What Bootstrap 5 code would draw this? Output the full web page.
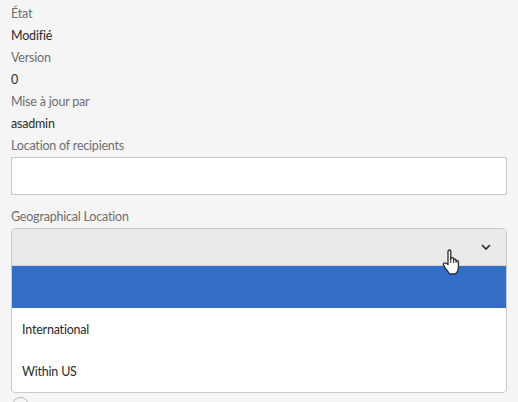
<!DOCTYPE html>
<html lang="fr">
<head>
<meta charset="utf-8">
<title>Propriétés</title>
<link href="https://cdn.jsdelivr.net/npm/bootstrap@5.3.0/dist/css/bootstrap.min.css" rel="stylesheet">
<style>
html,body{height:100%;overflow:hidden}
body{background:#f5f5f5;font-family:"Lato","Noto Sans",sans-serif;font-size:12.5px;letter-spacing:-.2px;color:#2c2c2c}
.sheet{padding:2px 11px 0 11px;position:relative}
.meta-label,.meta-value{height:22px;line-height:24px;margin:0}
.meta-label{color:#6e6e6e}
.meta-value{color:#2c2c2c}
.loc-input{display:block;width:100%;height:38px;margin-top:1px;background:#fff;border:1px solid #cacaca;border-radius:0;padding:0 10px}
.geo-label{margin-top:10px}
.geo-select{margin-top:1px;border:1px solid #cacaca;border-radius:4px;background:#fff;overflow:hidden}
.geo-toggle{height:37px;background:#eaeaea;border-bottom:1px solid #d4d4d4;padding-right:15px}
.geo-opt{height:42px;padding:2px 0 0 10px;color:#2c2c2c}
.geo-opt.is-active{background:#326ec8}
.radio-peek{width:17px;height:17px;border:1px solid #b8b8b8;border-radius:50%;background:#f5f5f5;margin:4px 0 0 1px}
.hand{position:absolute;left:440px;top:248px;width:24px;height:28px}
</style>
</head>
<body>
<div class="sheet">
  <p class="meta-label">État</p>
  <p class="meta-value">Modifié</p>
  <p class="meta-label">Version</p>
  <p class="meta-value">0</p>
  <p class="meta-label">Mise à jour par</p>
  <p class="meta-value">asadmin</p>
  <p class="meta-label">Location of recipients</p>
  <input class="loc-input" type="text" aria-label="Location of recipients">
  <p class="meta-label geo-label">Geographical Location</p>
  <div class="geo-select">
    <div class="geo-toggle d-flex align-items-center justify-content-end">
      <svg width="10" height="6" viewBox="0 0 10 6"><path d="M1 1l4 4 4-4" fill="none" stroke="#2c2c2c" stroke-width="1.7"/></svg>
    </div>
    <div class="geo-opt is-active"></div>
    <div class="geo-opt d-flex align-items-center">International</div>
    <div class="geo-opt d-flex align-items-center">Within US</div>
  </div>
  <div class="radio-peek"></div>
  <svg class="hand" viewBox="0 0 24 28"><path d="M8 3.500c0-2 2.800-2 2.800 0V11l.2-.6c.3-1.200 2.600-1 2.600.4V12c.3-1.200 2.500-1 2.500.4v.8c.3-1 2.300-.8 2.300.5v6c0 3-1.600 4.800-3 6.300H10c-1.500-2-5-5-6.500-9-.7-1.900 1.200-2.800 2.500-1.700L8 16.500z" fill="#fff" stroke="#2a2a2a" stroke-width="1.300" stroke-linejoin="round"/><path d="M10.800 10v5M13.600 11v4M16.100 12v3" stroke="#2a2a2a" stroke-width="1" fill="none"/></svg>
</div>
</body>
</html>
